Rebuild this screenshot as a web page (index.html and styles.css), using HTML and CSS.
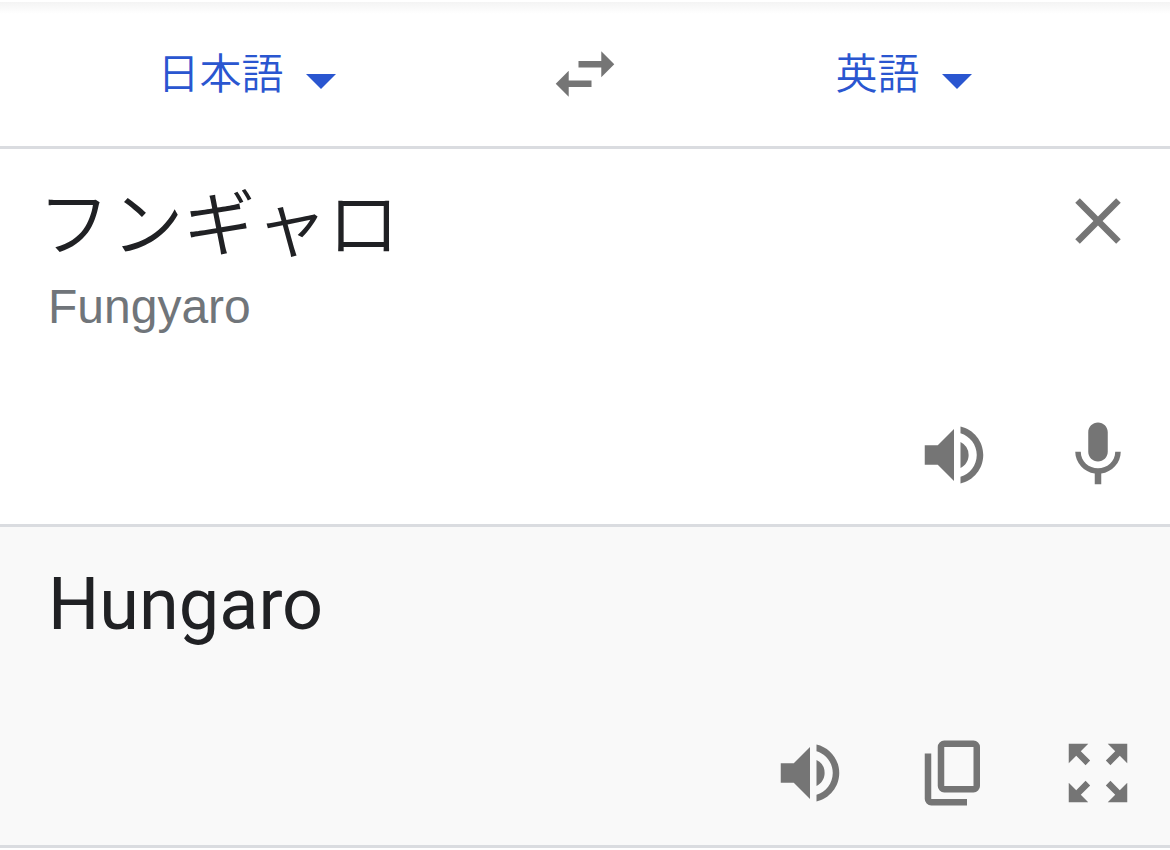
FILE: index.html
```html
<!DOCTYPE html>
<html lang="ja">
<head>
  <meta charset="UTF-8">
  <meta name="viewport" content="width=device-width, initial-scale=1.0">
  <title>翻訳</title>
  <link rel="stylesheet" href="styles.css">
</head>
<body>
  <header class="languages">
    <button type="button" class="language">
      日本語
      <svg class="arrow" viewBox="0 0 10 5" aria-hidden="true"><path d="M0 0l5 5 5-5z"/></svg>
    </button>
    <button type="button" class="icon-button" aria-label="言語を入れ替える">
      <svg class="icon" viewBox="0 0 24 24"><path d="M6.99 11L3 15l3.99 4v-3H14v-2H6.99v-3zM21 9l-3.99-4v3H10v2h7.01v3L21 9z"/></svg>
    </button>
    <button type="button" class="language">
      英語
      <svg class="arrow" viewBox="0 0 10 5" aria-hidden="true"><path d="M0 0l5 5 5-5z"/></svg>
    </button>
  </header>

  <main>
    <section class="panel source">
      <div class="source-row">
        <input type="text" class="source-text" value="フンギャロ" aria-label="原文" spellcheck="false">
        <button type="button" class="icon-button" aria-label="原文を消去">
          <svg class="icon" viewBox="0 0 24 24"><path d="M19 6.41L17.59 5 12 10.59 6.41 5 5 6.41 10.59 12 5 17.59 6.41 19 12 13.41 17.59 19 19 17.59 13.41 12z"/></svg>
        </button>
      </div>
      <p class="romaji">Fungyaro</p>
      <div class="actions">
        <button type="button" class="icon-button" aria-label="原文を聞く">
          <svg class="icon" viewBox="0 0 24 24"><path d="M3 9v6h4l5 5V4L7 9H3zm13.5 3A4.5 4.5 0 0 0 14 7.97v8.05c1.48-.73 2.5-2.25 2.5-4.02zM14 3.23v2.06c2.89.86 5 3.54 5 6.71s-2.11 5.85-5 6.71v2.06c4.01-.91 7-4.49 7-8.77s-2.99-7.86-7-8.77z"/></svg>
        </button>
        <button type="button" class="icon-button" aria-label="音声入力">
          <svg class="icon" viewBox="0 0 24 24"><path d="M12 14c1.66 0 3-1.34 3-3V5c0-1.66-1.34-3-3-3S9 3.34 9 5v6c0 1.66 1.34 3 3 3zm5.3-3c0 3-2.54 5.1-5.3 5.1S6.7 14 6.7 11H5c0 3.41 2.72 6.23 6 6.72V21h2v-3.28c3.28-.48 6-3.3 6-6.72h-1.7z"/></svg>
        </button>
      </div>
    </section>

    <section class="panel result">
      <p class="result-text" lang="en">Hungaro</p>
      <div class="actions">
        <button type="button" class="icon-button" aria-label="翻訳を聞く">
          <svg class="icon" viewBox="0 0 24 24"><path d="M3 9v6h4l5 5V4L7 9H3zm13.5 3A4.5 4.5 0 0 0 14 7.97v8.05c1.48-.73 2.5-2.25 2.5-4.02zM14 3.23v2.06c2.89.86 5 3.54 5 6.71s-2.11 5.85-5 6.71v2.06c4.01-.91 7-4.49 7-8.77s-2.99-7.86-7-8.77z"/></svg>
        </button>
        <button type="button" class="icon-button" aria-label="翻訳をコピー">
          <svg class="icon" viewBox="0 0 24 24"><path d="M18 2H9a2 2 0 0 0-2 2v12a2 2 0 0 0 2 2h9a2 2 0 0 0 2-2V4a2 2 0 0 0-2-2zm0 14H9V4h9v12zM3 6v14a2 2 0 0 0 2 2h11v-2H5V6H3z"/></svg>
        </button>
        <button type="button" class="icon-button" aria-label="全画面表示">
          <svg class="icon" viewBox="0 0 24 24"><path d="M15 3l2.3 2.3-2.89 2.87 1.42 1.42L18.7 6.7 21 9V3h-6zM3 9l2.3-2.3 2.87 2.89 1.42-1.42L6.7 5.3 9 3H3v6zm6 12l-2.3-2.3 2.89-2.87-1.42-1.42L5.3 17.3 3 15v6h6zm12-6l-2.3 2.3-2.87-2.89-1.42 1.42 2.89 2.87L15 21h6v-6z"/></svg>
        </button>
      </div>
    </section>
  </main>
</body>
</html>
```
FILE: styles.css
```css
* {
  box-sizing: border-box;
}

body {
  margin: 0;
  padding-top: 2px;
  background-color: #fff;
  color: #202124;
  font-family: "Liberation Sans", "Noto Sans CJK JP", sans-serif;
}

button,
input {
  margin: 0;
  padding: 0;
  border: none;
  background: none;
  color: inherit;
  font-family: inherit;
}

button {
  cursor: pointer;
}

p {
  margin: 0;
}

.languages {
  display: grid;
  grid-template-columns: 1fr 144px 1fr;
  align-items: center;
  justify-items: center;
  height: 147px;
  border-bottom: 3px solid #dadce0;
  background: linear-gradient(#f4f4f4, #fff 12px);
}

.language {
  display: flex;
  align-items: center;
  gap: 22px;
  padding: 2px 20px 0 0;
  color: #2a56d0;
  font-size: 42px;
  font-weight: 350;
  line-height: 60px;
}

.arrow {
  width: 30px;
  height: 15px;
  margin-top: 12px;
  fill: currentColor;
}

.icon-button {
  width: 78px;
  height: 78px;
}

.icon {
  display: block;
  width: 78px;
  height: 78px;
  fill: #757575;
}

.panel {
  display: flex;
  flex-direction: column;
  padding: 33px 33px 30px 48px;
  border-bottom: 3px solid #dadce0;
}

.source {
  min-height: 378px;
}

.source-row {
  display: flex;
  align-items: center;
}

/* kana have wide side bearings, pull them back to the text edge */
.source-text {
  flex: 1;
  min-width: 0;
  height: 78px;
  margin-left: -10px;
  padding-bottom: 6px;
  font-size: 72px;
  font-weight: 350;
  outline: none;
}

.romaji {
  margin-top: 17px;
  color: #70757a;
  font-size: 48px;
  line-height: 60px;
}

.result {
  min-height: 321px;
  padding-bottom: 33px;
  background-color: #f9f9f9;
}

.result-text {
  font-family: Roboto, sans-serif;
  font-size: 72px;
  line-height: 90px;
}

.actions {
  display: flex;
  justify-content: flex-end;
  gap: 66px;
  margin-top: auto;
}
```
